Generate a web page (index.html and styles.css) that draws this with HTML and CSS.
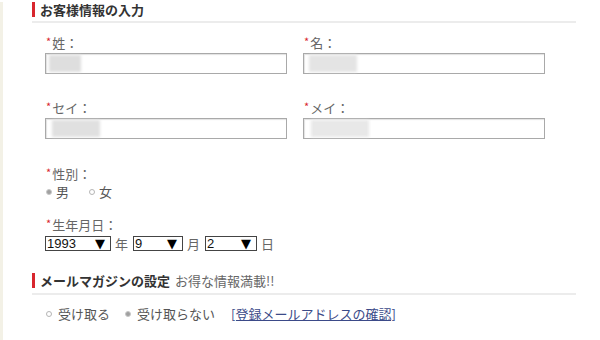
FILE: index.html
```html
<!DOCTYPE html>
<html lang="ja">
<head>
<meta charset="utf-8">
<link rel="stylesheet" href="styles.css">
</head>
<body>
<div class="page">
  <div class="sec-head"><span class="sec-title">お客様情報の入力</span></div>
  <div class="form">
    <div class="pair">
      <div class="field">
        <div class="label"><span class="req">*</span>姓：</div>
        <div class="input"><span class="blur b1"></span></div>
      </div>
      <div class="field">
        <div class="label"><span class="req">*</span>名：</div>
        <div class="input"><span class="blur b2"></span></div>
      </div>
    </div>
    <div class="pair second">
      <div class="field">
        <div class="label"><span class="req">*</span>セイ：</div>
        <div class="input"><span class="blur b3"></span></div>
      </div>
      <div class="field">
        <div class="label"><span class="req">*</span>メイ：</div>
        <div class="input"><span class="blur b4"></span></div>
      </div>
    </div>
    <div class="label gender"><span class="req">*</span>性別：</div>
    <div class="radios r1">
      <span class="radio on"></span><span class="rtext">男</span>
      <span class="radio"></span><span class="rtext">女</span>
    </div>
    <div class="label birth"><span class="req">*</span>生年月日：</div>
    <div class="dates">
      <div class="select s-year"><span class="val">1993</span><span class="arrow">▼</span></div>
      <span class="unit">年</span>
      <div class="select s-month"><span class="val">9</span><span class="arrow">▼</span></div>
      <span class="unit">月</span>
      <div class="select s-day"><span class="val">2</span><span class="arrow">▼</span></div>
      <span class="unit">日</span>
    </div>
  </div>
  <div class="sec-head mag"><span class="sec-title">メールマガジンの設定</span><span class="sub">お得な情報満載!!</span></div>
  <div class="form">
    <div class="radios r2">
      <span class="radio"></span><span class="rtext">受け取る</span>
      <span class="radio on"></span><span class="rtext">受け取らない</span>
      <a class="link" href="#">[登録メールアドレスの確認]</a>
    </div>
  </div>
</div>
</body>
</html>
```

FILE: styles.css
```css
html, body {
  margin: 0;
  padding: 0;
  background: #ffffff;
}
body {
  font-family: "Noto Sans CJK JP", "Noto Sans", sans-serif;
  font-size: 13px;
  color: #555;
  width: 600px;
  height: 340px;
  overflow: hidden;
}
.page {
  border-left: 3px solid #f3f1e6;
  padding-left: 29px;
  width: 544px;
  height: 340px;
  box-sizing: content-box;
}
.sec-head {
  margin-top: 2px;
  padding-bottom: 4px;
  border-bottom: 2px solid #ececec;
  display: flex;
  align-items: center;
}
.sec-title {
  border-left: 3px solid #d8262e;
  padding-left: 5px;
  line-height: 15px;
  font-weight: bold;
  color: #333;
  font-size: 13px;
}
.sec-head.mag {
  margin-top: 22px;
  padding-bottom: 5px;
}
.sub {
  margin-left: 5px;
  color: #666;
  line-height: 15px;
}
.form {
  padding-left: 13px;
}
.pair {
  display: flex;
  gap: 16px;
  margin-top: 12px;
}
.pair.second {
  margin-top: 26px;
}
.field {
  width: 242px;
}
.label {
  line-height: 16px;
  color: #666;
  padding-left: 1px;
}
.req {
  color: #d8262e;
  font-size: 11px;
  position: relative;
  top: -2px;
  margin-right: 1px;
}
.input {
  margin-top: 2px;
  height: 21px;
  box-sizing: border-box;
  border: 1px solid #a9a9a9;
  box-shadow: inset 1px 1px 1px #e2e2e2;
  padding: 1px 1px;
  display: flex;
}
.blur {
  display: inline-block;
  height: 17px;
  background: #dedede;
  filter: blur(1.5px);
}
.b1 { width: 32px; margin-left: 2px; }
.b2 { width: 48px; margin-left: 4px; background: #e4e4e4; }
.b3 { width: 48px; margin-left: 5px; background: #e0e0e0; }
.b4 { width: 58px; margin-left: 6px; background: #e8e8e8; }
.label.gender {
  margin-top: 27px;
}
.radios {
  display: flex;
  align-items: center;
  line-height: 16px;
  margin-top: 2px;
  color: #555;
}
.radio {
  width: 6px;
  height: 6px;
  border-radius: 50%;
  border: 1px solid #b5b5b5;
  background: #fff;
  box-sizing: border-box;
  margin-left: 1px;
}
.radio.on {
  background: #a0a0a0;
  border-color: #c8c8c8;
}
.r1 .rtext {
  margin-left: 4px;
  margin-right: 19px;
}
.label.birth {
  margin-top: 17px;
}
.dates {
  display: flex;
  align-items: center;
  margin-top: 3px;
  height: 15px;
}
.select {
  height: 15px;
  box-sizing: border-box;
  border: 1px solid #444;
  display: flex;
  align-items: center;
  justify-content: space-between;
  padding: 0 5px 0 1px;
  font-family: "Liberation Sans", Arial, sans-serif;
  font-size: 13px;
  color: #111;
  line-height: 13px;
}
.arrow {
  font-family: "DejaVu Sans", sans-serif;
  font-size: 13px;
  color: #000;
}
.s-year { width: 66px; }
.s-month { width: 50px; }
.s-day { width: 52px; }
.unit {
  color: #666;
  margin: 0 5px 0 4px;
  line-height: 15px;
}
.r2 {
  margin-top: 11px;
}
.r2 .rtext {
  margin-left: 6px;
  margin-right: 14px;
}
.link {
  margin-left: 2px;
  color: #3b4a88;
  text-decoration: underline;
}
```
